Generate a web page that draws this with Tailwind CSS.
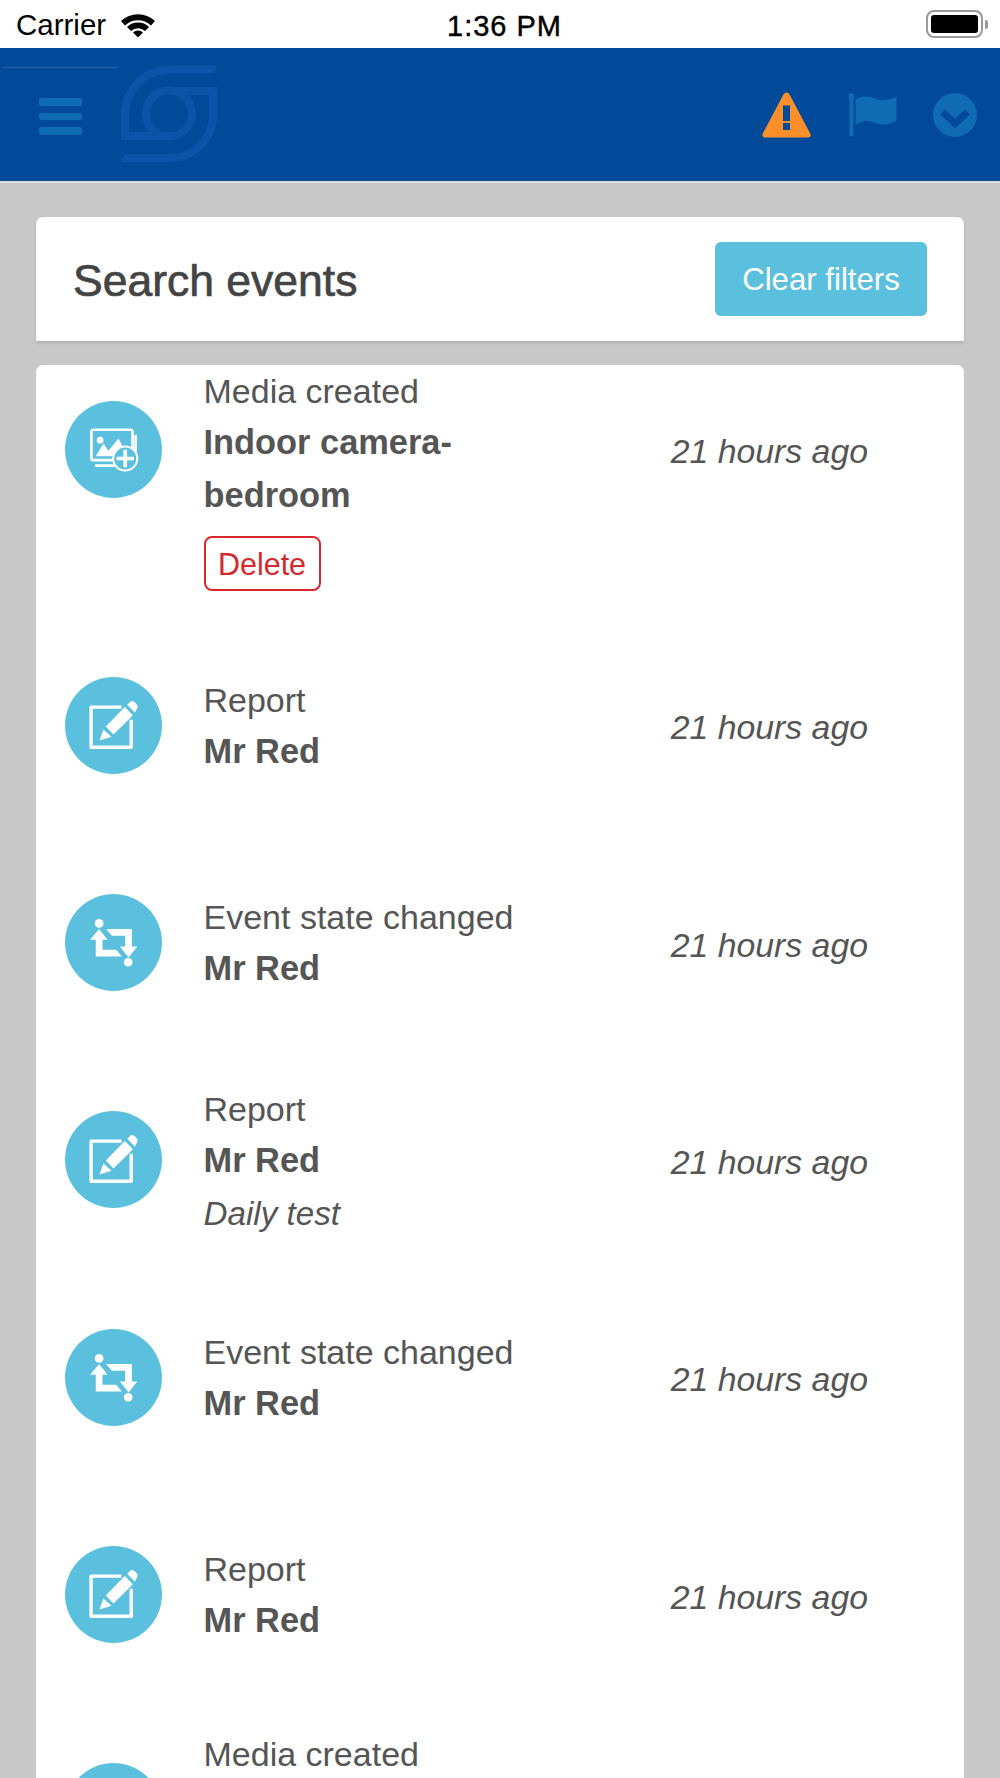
<!DOCTYPE html>
<html lang="en">
<head>
<meta charset="utf-8">
<title>Search events</title>
<script src="https://cdn.jsdelivr.net/npm/@tailwindcss/browser@4"></script>
</head>
<body class="m-0 bg-[#c8c8c8]">
<div class="h-[1778px] w-[1000px] overflow-hidden bg-[#c8c8c8] font-['Liberation_Sans',Arial,sans-serif] text-[#555]">

  <!-- status bar -->
  <div class="relative flex h-[48px] items-center justify-between bg-white pl-[16px] pr-[12px] text-black">
    <div class="flex items-center gap-[15px] pt-[2px]">
      <span class="text-[29.500px] leading-none">Carrier</span>
      <svg class="h-[24px] w-[34px]" viewBox="121 12 34 24" fill="#000">
        <path d="M121 20 A25 25 0 0 1 155 20 L151 24.5 A19 19 0 0 0 125 24.5 Z"/>
        <path d="M127 26 A16 16 0 0 1 149 26 L145 30 A10.500 10.500 0 0 0 131 30 Z"/>
        <path d="M133 31.500 A7.500 7.500 0 0 1 143 31.500 L138 36.500 Z"/>
      </svg>
    </div>
    <span class="absolute left-[447px] top-[10px] text-[29px] leading-[32px] font-medium tracking-[1px] [-webkit-text-stroke:0.4px_#000]">1:36 PM</span>
    <div class="flex items-center gap-[2px]">
      <div class="h-[28px] w-[57px] rounded-[8px] border-2 border-[#999] p-[3px]">
        <div class="h-full w-full rounded-[3px] bg-black"></div>
      </div>
      <div class="h-[9px] w-[3px] rounded-r-[2px] bg-[#999]"></div>
    </div>
  </div>

  <!-- app header -->
  <header class="relative flex h-[135px] items-center border-b-2 border-[#dcdcdc] bg-[#004a99] pl-[39px] pr-[23px]">
    <div class="absolute left-[3px] top-[19px] h-[1px] w-[115px] bg-[#2a64a8]"></div>
    <div class="mt-[4px] flex w-[43px] flex-col gap-[7px]">
      <div class="h-[7.500px] rounded-[2px] bg-[#0f6cb2]"></div>
      <div class="h-[7.500px] rounded-[2px] bg-[#0f6cb2]"></div>
      <div class="h-[7.500px] rounded-[2px] bg-[#0f6cb2]"></div>
    </div>
    <svg class="mb-[2px] ml-[39px] h-[97px] w-[97px]" viewBox="121 65 97 97" fill="none" stroke="#0a55a8" stroke-width="8">
      <path d="M214 69.500 H170 A45 45 0 0 0 125 114 V136 H170"/>
      <path d="M125 158 H170 A43 43 0 0 0 213 115 V91 H170"/>
      <circle cx="169" cy="113.500" r="23"/>
      <polygon points="214,65.500 217.500,65.500 214,73.500" fill="#0a55a8" stroke="none"/>
      <polygon points="125,154 125,162 121,162" fill="#0a55a8" stroke="none"/>
    </svg>
    <svg class="ml-auto h-[46px] w-[49px]" viewBox="761.500 91.500 49 46">
      <path d="M786 92 C784.500 92 783.500 93 782.800 94.300 L762.300 133 C761 135.500 762.500 137 764.500 137 H807.500 C809.500 137 811 135.500 809.700 133 L789.200 94.300 C788.500 93 787.500 92 786 92 Z" fill="#fd8f2b"/>
      <rect x="782.500" y="105" width="7" height="15.500" fill="#004a99"/>
      <rect x="782.500" y="122.500" width="7" height="7" fill="#004a99"/>
    </svg>
    <svg class="ml-[38px] h-[44px] w-[48px]" viewBox="848.500 92.500 48 44" fill="#0f6cb2">
      <rect x="849" y="96" width="4" height="40" rx="1.500"/>
      <circle cx="850.500" cy="96" r="3.400"/>
      <path d="M855 99 C863 94 870 96 876 98.500 C882 101 888 100 896 96 V120 C888 124.500 882 125.500 875 122.500 C869 120 862 119 855 124.500 Z"/>
    </svg>
    <svg class="ml-[36px] h-[44px] w-[44px]" viewBox="933 92 44 44">
      <circle cx="955" cy="114" r="22" fill="#0f6cb2"/>
      <path d="M942.500 111 L955 122.500 L967.500 111" fill="none" stroke="#004a99" stroke-width="7"/>
    </svg>
  </header>

  <main class="flex flex-col px-[36px] pt-[34px]">
    <section class="flex h-[124px] items-center justify-between rounded-t-[7px] bg-white pl-[37px] pr-[37px] shadow-[0_2px_3px_rgba(0,0,0,0.12)]">
      <h1 class="pt-[4px] text-[44.500px] leading-none font-normal text-[#444] [-webkit-text-stroke:0.7px_#444]">Search events</h1>
      <button class="h-[74px] w-[212px] rounded-[6px] bg-[#5bc0de] pt-[2px] text-[31.200px] text-white">Clear filters</button>
    </section>

    <section class="mt-[24px] rounded-t-[7px] bg-white text-[34px]">

      <!-- row 1 -->
      <article class="flex h-[251.500px] items-start pl-[29px] pr-[96px]">
        <div class="mt-[36px] h-[97px] w-[97px] shrink-0 rounded-full bg-[#5bc0de]">
          <svg class="h-[97px] w-[97px]" viewBox="45 63 290 290" fill="none" stroke="#fff">
            <rect x="124" y="149" width="123" height="91" rx="6" stroke-width="8"/>
            <path d="M256 165 V240 M135 256 H195" stroke-width="8"/>
            <circle cx="150" cy="180" r="10" fill="#fff" stroke="none"/>
            <path d="M137 228 L160 190 L175 212 L205 175 L218 200 L190 228 Z" fill="#fff" stroke="none"/>
            <circle cx="225" cy="235" r="36" fill="#5bc0de" stroke-width="6"/>
            <path d="M199 235 H251 M225 209 V261" stroke-width="11"/>
          </svg>
        </div>
        <div class="ml-[41.500px] w-[360px] pt-[2px]">
          <div class="h-[48px] leading-[48px]">Media created</div>
          <div class="pt-[1px] text-[34.400px] leading-[53px] font-bold">Indoor camera-bedroom</div>
          <button class="mt-[14px] block h-[55px] w-[117px] rounded-[8px] border-2 border-[#d9272e] pt-[2px] text-[30.500px] text-[#d9272e]">Delete</button>
        </div>
        <div class="ml-auto mt-[62px] text-[33.800px] italic leading-[48px]">21 hours ago</div>
      </article>

      <!-- row 2 -->
      <article class="flex h-[217.400px] items-center pl-[29px] pr-[96px]">
        <div class="h-[97px] w-[97px] shrink-0 rounded-full bg-[#5bc0de]">
          <svg class="h-[97px] w-[97px]" viewBox="45 50 290 290" fill="none">
            <path d="M214 140 H123 V260 H243 V178" stroke="#fff" stroke-width="10" stroke-linejoin="round"/>
            <polygon points="148,240 160,207 184,229" fill="#fff"/>
            <polygon points="167,198 224,140 248,164 190,222" fill="#fff"/>
            <path d="M231 133 L241 123 Q247 120 253 125 L261 134 Q264 140 260 145 L254 157 Z" fill="#fff"/>
          </svg>
        </div>
        <div class="ml-[41.500px] w-[360px] pt-[3px]">
          <div class="h-[48px] leading-[48px]">Report</div>
          <div class="pt-[1px] text-[34.400px] leading-[53px] font-bold">Mr Red</div>
        </div>
        <div class="ml-auto mt-[4px] text-[33.800px] italic leading-[48px]">21 hours ago</div>
      </article>

      <!-- row 3 -->
      <article class="flex h-[217.400px] items-center pl-[29px] pr-[96px]">
        <div class="h-[97px] w-[97px] shrink-0 rounded-full bg-[#5bc0de]">
          <svg class="h-[97px] w-[97px]" viewBox="45 40 290 290" fill="#fff">
            <circle cx="147" cy="128" r="13"/>
            <circle cx="234" cy="244" r="13"/>
            <polygon points="147,145 172,177 157,177 157,207 198,207 215,227 137,227 137,177 120,177"/>
            <polygon points="168,145 245,145 245,197 261,197 235,230 209,197 225,197 225,165 185,165"/>
          </svg>
        </div>
        <div class="ml-[41.500px] w-[360px] pt-[3px]">
          <div class="h-[48px] leading-[48px]">Event state changed</div>
          <div class="pt-[1px] text-[34.400px] leading-[53px] font-bold">Mr Red</div>
        </div>
        <div class="ml-auto mt-[4px] text-[33.800px] italic leading-[48px]">21 hours ago</div>
      </article>

      <!-- row 4 -->
      <article class="flex h-[217.400px] items-center pl-[29px] pr-[96px]">
        <div class="h-[97px] w-[97px] shrink-0 rounded-full bg-[#5bc0de]">
          <svg class="h-[97px] w-[97px]" viewBox="45 50 290 290" fill="none">
            <path d="M214 140 H123 V260 H243 V178" stroke="#fff" stroke-width="10" stroke-linejoin="round"/>
            <polygon points="148,240 160,207 184,229" fill="#fff"/>
            <polygon points="167,198 224,140 248,164 190,222" fill="#fff"/>
            <path d="M231 133 L241 123 Q247 120 253 125 L261 134 Q264 140 260 145 L254 157 Z" fill="#fff"/>
          </svg>
        </div>
        <div class="ml-[41.500px] w-[360px] pt-[6px]">
          <div class="h-[48px] leading-[48px]">Report</div>
          <div class="pt-[1px] text-[34.400px] leading-[53px] font-bold">Mr Red</div>
          <div class="text-[33.200px] italic leading-[54px]">Daily test</div>
        </div>
        <div class="ml-auto mt-[4px] text-[33.800px] italic leading-[48px]">21 hours ago</div>
      </article>

      <!-- row 5 -->
      <article class="flex h-[217.400px] items-center pl-[29px] pr-[96px]">
        <div class="h-[97px] w-[97px] shrink-0 rounded-full bg-[#5bc0de]">
          <svg class="h-[97px] w-[97px]" viewBox="45 40 290 290" fill="#fff">
            <circle cx="147" cy="128" r="13"/>
            <circle cx="234" cy="244" r="13"/>
            <polygon points="147,145 172,177 157,177 157,207 198,207 215,227 137,227 137,177 120,177"/>
            <polygon points="168,145 245,145 245,197 261,197 235,230 209,197 225,197 225,165 185,165"/>
          </svg>
        </div>
        <div class="ml-[41.500px] w-[360px] pt-[3px]">
          <div class="h-[48px] leading-[48px]">Event state changed</div>
          <div class="pt-[1px] text-[34.400px] leading-[53px] font-bold">Mr Red</div>
        </div>
        <div class="ml-auto mt-[4px] text-[33.800px] italic leading-[48px]">21 hours ago</div>
      </article>

      <!-- row 6 -->
      <article class="mb-[23.500px] flex h-[217.400px] items-center pl-[29px] pr-[96px]">
        <div class="h-[97px] w-[97px] shrink-0 rounded-full bg-[#5bc0de]">
          <svg class="h-[97px] w-[97px]" viewBox="45 50 290 290" fill="none">
            <path d="M214 140 H123 V260 H243 V178" stroke="#fff" stroke-width="10" stroke-linejoin="round"/>
            <polygon points="148,240 160,207 184,229" fill="#fff"/>
            <polygon points="167,198 224,140 248,164 190,222" fill="#fff"/>
            <path d="M231 133 L241 123 Q247 120 253 125 L261 134 Q264 140 260 145 L254 157 Z" fill="#fff"/>
          </svg>
        </div>
        <div class="ml-[41.500px] w-[360px] pt-[3px]">
          <div class="h-[48px] leading-[48px]">Report</div>
          <div class="pt-[1px] text-[34.400px] leading-[53px] font-bold">Mr Red</div>
        </div>
        <div class="ml-auto mt-[4px] text-[33.800px] italic leading-[48px]">21 hours ago</div>
      </article>

      <!-- row 7, cut off by the viewport -->
      <article class="flex h-[251.500px] items-start pl-[29px] pr-[96px]">
        <div class="mt-[36px] h-[97px] w-[97px] shrink-0 rounded-full bg-[#5bc0de]"></div>
        <div class="ml-[41.500px] w-[360px] pt-[3px]">
          <div class="h-[48px] leading-[48px]">Media created</div>
        </div>
      </article>
    </section>
  </main>
</div>
</body>
</html>
